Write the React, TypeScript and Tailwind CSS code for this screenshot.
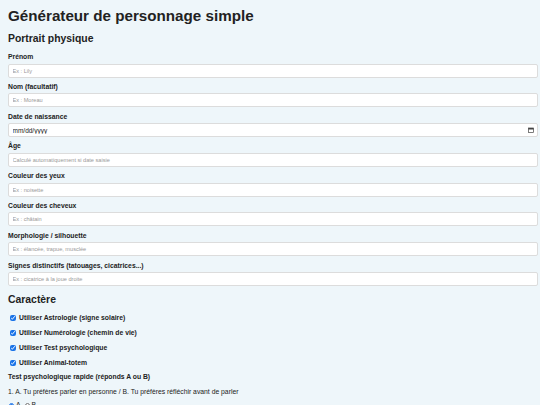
const fields = [
  { label: "Prénom", placeholder: "Ex : Lily" },
  { label: "Nom (facultatif)", placeholder: "Ex : Moreau" },
  { label: "Date de naissance", type: "date" },
  { label: "Âge", placeholder: "Calculé automatiquement si date saisie" },
  { label: "Couleur des yeux", placeholder: "Ex : noisette" },
  { label: "Couleur des cheveux", placeholder: "Ex : châtain" },
  { label: "Morphologie / silhouette", placeholder: "Ex : élancée, trapue, musclée" },
  { label: "Signes distinctifs (tatouages, cicatrices...)", placeholder: "Ex : cicatrice à la joue droite" },
];

const options = [
  "Utiliser Astrologie (signe solaire)",
  "Utiliser Numérologie (chemin de vie)",
  "Utiliser Test psychologique",
  "Utiliser Animal-totem",
];

function CalendarIcon() {
  return (
    <svg width="6" height="6" viewBox="0 0 12 12" className="absolute right-[4px] top-[4px] pointer-events-none">
      <rect x="1" y="2" width="10" height="9" fill="none" stroke="#444" strokeWidth="1.4" />
      <rect x="1" y="2" width="10" height="3" fill="#444" />
    </svg>
  );
}

function App() {
  return (
    <div className="min-h-screen bg-[#eef6fa] px-[8px] pt-[7px] text-[#222] font-['Liberation_Sans',Arial,sans-serif]">
      <h1 className="text-[15.2px] leading-[18px] font-bold">Générateur de personnage simple</h1>

      <h2 className="mt-[8px] text-[10.4px] leading-[12px] font-bold">Portrait physique</h2>

      <div className="mt-[8px] flex flex-col">
        {fields.map((f) => (
          <div key={f.label} className="mb-[5.3px]">
            <label className="block text-[6.8px] leading-[8px] font-bold">{f.label}</label>
            {f.type === "date" ? (
              <div className="relative mt-[2.5px] w-[530px]">
                <input
                  placeholder="mm/dd/yyyy"
                  className="block h-[14px] w-full rounded-[2px] border border-[#dcdcdc] bg-white px-[3.5px] text-[6.5px] placeholder-[#222]"
                />
                <CalendarIcon />
              </div>
            ) : (
              <input
                placeholder={f.placeholder}
                className="mt-[2.5px] block h-[14px] w-[530px] rounded-[2px] border border-[#dcdcdc] bg-white px-[3.5px] text-[5.6px] placeholder-[#999]"
              />
            )}
          </div>
        ))}
      </div>

      <h2 className="mt-[3px] text-[10.4px] leading-[12px] font-bold">Caractère</h2>

      <div className="mt-[8px] flex flex-col gap-[7px]">
        {options.map((o) => (
          <label key={o} className="flex items-center h-[8px] text-[6.8px] font-bold">
            <input type="checkbox" defaultChecked className="ml-[2px] mr-[3px] w-[6px] h-[6px] accent-[#1a73e8]" />
            {o}
          </label>
        ))}
      </div>

      <p className="mt-[6px] text-[6.8px] leading-[8px] font-bold">Test psychologique rapide (réponds A ou B)</p>
      <p className="mt-[7px] text-[6.8px] leading-[8px]">
        1. A. Tu préfères parler en personne / B. Tu préfères réfléchir avant de parler
      </p>
      <div className="mt-[5px] flex items-center gap-[2px] text-[6.8px] leading-[8px]">
        <input type="radio" name="q1" defaultChecked className="ml-[1px] w-[5px] h-[5px] accent-[#1a73e8]" />
        <span>A</span>
        <input type="radio" name="q1" className="ml-[2px] w-[5px] h-[5px]" />
        <span>B</span>
      </div>
    </div>
  );
}

export default App;
